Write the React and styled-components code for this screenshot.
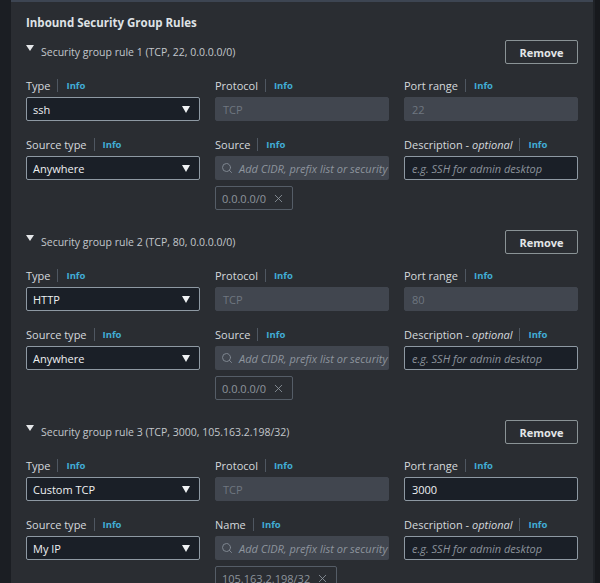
import React from "react";
import styled, { createGlobalStyle } from "styled-components";
import { Search, X } from "lucide-react";

const Global = createGlobalStyle`
  html, body { margin: 0; padding: 0; background: #1b1d22; }
  body { font-family: "Open Sans", "Noto Sans", sans-serif; }
  * { box-sizing: border-box; }
`;

const Page = styled.div`
  display: flex;
  min-height: 583px;
  height: 583px;
  overflow: hidden;
  background: #1b1d22;
`;

const LeftStrip = styled.div`
  width: 11px;
  flex: none;
  background: #1b1e23;
`;

const RightStrip = styled.div`
  width: 7px;
  flex: none;
  background: #17191d;
  border-left: 2px solid #1f2227;
`;

const Panel = styled.div`
  flex: 1;
  background: #2a2d32;
  border-top: 2px solid #3d4552;
  padding: 13px 14px 0 15px;
  overflow: hidden;
`;

const Title = styled.h2`
  margin: 0 0 9px;
  font-size: 11.5px;
  line-height: 16px;
  font-weight: 700;
  color: #dfe2e5;
`;

const Rule = styled.section`
  margin-bottom: 20px;
`;

const RuleHeader = styled.div`
  display: flex;
  align-items: center;
  justify-content: space-between;
  height: 24px;
  margin-bottom: 13px;
`;

const RuleTitle = styled.div`
  display: flex;
  align-items: flex-start;
  gap: 7px;
  font-size: 10.5px;
  line-height: 16px;
  color: #c3c7cc;
`;

const Caret = styled.span`
  width: 0;
  height: 0;
  margin-top: 1px;
  border-left: 4px solid transparent;
  border-right: 4px solid transparent;
  border-top: 6px solid #e4e6e9;
`;

const RemoveButton = styled.button`
  width: 73px;
  height: 24px;
  margin-right: 1px;
  border: 1px solid #8a9396;
  border-radius: 2px;
  background: transparent;
  color: #e2e5e8;
  font-family: inherit;
  font-size: 11px;
  font-weight: 700;
  padding: 0;
  cursor: pointer;
`;

const Grid = styled.div`
  display: grid;
  grid-template-columns: 174px 174px 174px;
  column-gap: 15px;
  row-gap: 15px;
  align-items: start;
`;

const Field = styled.div`
  display: flex;
  flex-direction: column;
  gap: 4px;
`;

const LabelRow = styled.div`
  display: flex;
  align-items: center;
  height: 16px;
  font-size: 11px;
  color: #d5d9dd;
  white-space: pre;
  em { font-style: italic; }
`;

const Sep = styled.span`
  width: 1px;
  height: 13px;
  background: #4f5761;
  margin: 0 8px 0 7px;
`;

const Info = styled.a`
  font-size: 9.5px;
  font-weight: 700;
  color: #41aed6;
`;

const BoxBase = styled.div`
  height: 24px;
  border-radius: 2px;
  display: flex;
  align-items: center;
  font-size: 11px;
  white-space: nowrap;
  overflow: hidden;
`;

const Select = styled(BoxBase)`
  background: #1a1f27;
  border: 1px solid #8e99a3;
  color: #eef0f2;
  padding: 0 9px 0 6px;
  justify-content: space-between;
`;

const SelectCaret = styled.span`
  width: 0;
  height: 0;
  border-left: 4.5px solid transparent;
  border-right: 4.5px solid transparent;
  border-top: 7px solid #f0f2f4;
`;

const Input = styled(BoxBase)`
  background: ${(p) => (p.$disabled ? "#41464f" : "#1a1f27")};
  border: 1px solid ${(p) => (p.$disabled ? "#41464f" : "#8e99a3")};
  color: ${(p) => (p.$disabled ? "#6f7680" : p.$placeholder ? "#8b929b" : "#eef0f2")};
  font-style: ${(p) => (p.$placeholder ? "italic" : "normal")};
  padding: 0 7px;
`;

const SearchBox = styled(BoxBase)`
  background: #41464f;
  color: #8d949d;
  font-style: italic;
  padding: 0 0 0 6px;
  gap: 6px;
  svg { flex: none; }
`;

const Token = styled.div`
  align-self: flex-start;
  margin-top: 2px;
  height: 24px;
  border: 1px solid #555d67;
  border-radius: 2px;
  display: flex;
  align-items: center;
  gap: 6px;
  padding: 0 7px 0 6px;
  font-size: 11px;
  color: #8d949c;
  white-space: nowrap;
`;

const Label = ({ children }) => (
  <LabelRow>
    {children}
    <Sep />
    <Info>Info</Info>
  </LabelRow>
);

const rules = [
  { n: 1, summary: "TCP, 22, 0.0.0.0/0", type: "ssh", port: "22", portEditable: false, sourceType: "Anywhere", sourceLabel: "Source", token: "0.0.0.0/0" },
  { n: 2, summary: "TCP, 80, 0.0.0.0/0", type: "HTTP", port: "80", portEditable: false, sourceType: "Anywhere", sourceLabel: "Source", token: "0.0.0.0/0" },
  { n: 3, summary: "TCP, 3000, 105.163.2.198/32", type: "Custom TCP", port: "3000", portEditable: true, sourceType: "My IP", sourceLabel: "Name", token: "105.163.2.198/32" },
];

function RuleBlock({ r }) {
  return (
    <Rule>
      <RuleHeader>
        <RuleTitle>
          <Caret />
          <span>Security group rule {r.n} ({r.summary})</span>
        </RuleTitle>
        <RemoveButton>Remove</RemoveButton>
      </RuleHeader>
      <Grid>
        <Field>
          <Label>Type</Label>
          <Select>
            <span>{r.type}</span>
            <SelectCaret />
          </Select>
        </Field>
        <Field>
          <Label>Protocol</Label>
          <Input $disabled>TCP</Input>
        </Field>
        <Field>
          <Label>Port range</Label>
          <Input $disabled={!r.portEditable}>{r.port}</Input>
        </Field>
        <Field>
          <Label>Source type</Label>
          <Select>
            <span>{r.sourceType}</span>
            <SelectCaret />
          </Select>
        </Field>
        <Field>
          <Label>{r.sourceLabel}</Label>
          <SearchBox>
            <Search size={12} color="#7f8690" strokeWidth={2} />
            <span>Add CIDR, prefix list or security group</span>
          </SearchBox>
          <Token>
            <span>{r.token}</span>
            <X size={13} color="#8d949c" strokeWidth={1.6} />
          </Token>
        </Field>
        <Field>
          <Label>
            {"Description - "}
            <em>optional</em>
          </Label>
          <Input $placeholder>e.g. SSH for admin desktop</Input>
        </Field>
      </Grid>
    </Rule>
  );
}

export default function App() {
  return (
    <>
      <Global />
      <Page>
        <LeftStrip />
        <Panel>
          <Title>Inbound Security Group Rules</Title>
          {rules.map((r) => (
            <RuleBlock key={r.n} r={r} />
          ))}
        </Panel>
        <RightStrip />
      </Page>
    </>
  );
}
